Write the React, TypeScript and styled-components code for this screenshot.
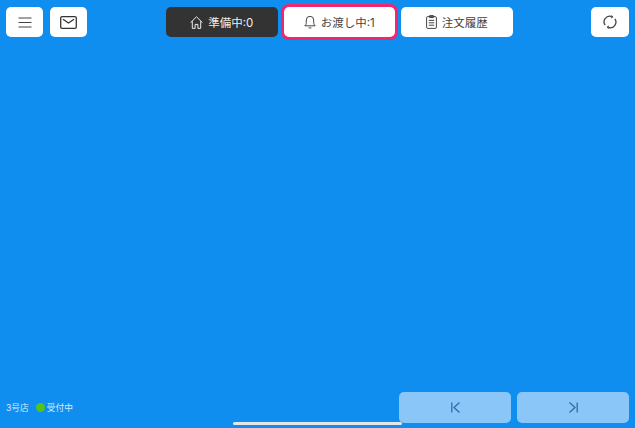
import styled, { createGlobalStyle } from "styled-components";

const GlobalStyle = createGlobalStyle`
    html, body {
        margin: 0;
        padding: 0;
        height: 100%;
        background-color: #0f8ef0;
    }
    body {
        font-family: "Inter", "Noto Sans CJK JP", sans-serif;
    }
`

export default function App() {
    return (
        <Screen>
            <GlobalStyle/>
            <Toolbar>
                <LeftGroup>
                    <IconButton aria-label="menu">
                        <svg width="14" height="11" viewBox="0 0 14 11" fill="none" stroke="#444" strokeWidth="1.2">
                            <path d="M.5 1h13M.5 5.5h13M.5 10h13"/>
                        </svg>
                    </IconButton>
                    <IconButton aria-label="mail">
                        <svg width="17" height="13" viewBox="0 0 17 13" fill="none" stroke="#333" strokeWidth="1.3">
                            <rect x=".7" y=".7" width="15.6" height="11.6" rx="1.4"/>
                            <path d="M3 3.2L8.5 7 14 3.2"/>
                        </svg>
                    </IconButton>
                </LeftGroup>
                <Tabs>
                    <Tab $active>
                        <svg width="13" height="13" viewBox="0 0 13 13" fill="none" stroke="#eee" strokeWidth="1">
                            <path d="M.6 6.6L6.5.8l5.9 5.8M2.3 5.2v7.2h2.8V8.4h2.8v4h2.8V5.2"/>
                        </svg>
                        準備中:0
                    </Tab>
                    <Tab $outlined>
                        <svg width="12" height="14" viewBox="0 0 12 14" fill="none" stroke="#444" strokeWidth="1">
                            <path d="M.8 10.8c1.2-1 1.5-2 1.5-3.6V5a3.7 3.7 0 0 1 7.4 0v2.2c0 1.6.3 2.6 1.5 3.6zM4.6 12.9h2.8"/>
                        </svg>
                        お渡し中:1
                    </Tab>
                    <Tab>
                        <svg width="11" height="14" viewBox="0 0 11 14" fill="none" stroke="#444" strokeWidth="1">
                            <rect x=".6" y="1.6" width="9.8" height="11.8" rx="1.2"/>
                            <path d="M3.6.6h3.8v2H3.6zM2.8 5.4h5.4M2.8 7.8h5.4M2.8 10.2h5.4"/>
                        </svg>
                        注文履歴
                    </Tab>
                </Tabs>
                <RefreshButton aria-label="refresh">
                    <svg width="14" height="14" viewBox="0 0 14 14" fill="none" stroke="#444" strokeWidth="1.3">
                        <path d="M2.2 10.2A5.6 5.6 0 0 1 8.8 1.7M11.8 3.8a5.6 5.6 0 0 1-6.6 8.5"/>
                        <path d="M8.6.4l1.2 1.7-1.8.9M5.4 13.6l-1.2-1.7 1.8-.9" strokeWidth="1"/>
                    </svg>
                </RefreshButton>
            </Toolbar>
            <Footer>
                <Status>
                    <span>3号店</span>
                    <Open><Dot/>受付中</Open>
                </Status>
                <Pager>
                    <PageButton aria-label="first">
                        <svg width="9" height="11" viewBox="0 0 9 11" fill="none" stroke="#2f6da8" strokeWidth="1.3">
                            <path d="M.8 .5v10M8.5 .5L3 5.5l5.5 5"/>
                        </svg>
                    </PageButton>
                    <PageButton aria-label="last">
                        <svg width="9" height="11" viewBox="0 0 9 11" fill="none" stroke="#2f6da8" strokeWidth="1.3">
                            <path d="M8.2 .5v10M.5 .5L6 5.5l-5.5 5"/>
                        </svg>
                    </PageButton>
                </Pager>
            </Footer>
            <HomeBar/>
        </Screen>
    );
}

const Screen = styled.div`
    position: relative;
    width: 635px;
    height: 428px;
    overflow: hidden;
    display: flex;
    flex-direction: column;
    justify-content: space-between;
    background-color: #0f8ef0;
`
const Toolbar = styled.header`
    display: flex;
    align-items: center;
    padding: 7px 6px 0;
`
const LeftGroup = styled.div`
    display: flex;
    gap: 7px;
`
const IconButton = styled.button`
    width: 37px;
    height: 30px;
    padding: 0;
    border: none;
    border-radius: 5px;
    background-color: #fff;
    display: flex;
    align-items: center;
    justify-content: center;
`
const RefreshButton = styled(IconButton)`
    width: 38px;
    margin-left: auto;
`
const Tabs = styled.nav`
    display: flex;
    gap: 6px;
    margin-left: 79px;
`
const Tab = styled.button<{ $active?: boolean; $outlined?: boolean }>`
    width: 111.5px;
    height: 30px;
    padding: 0;
    border: none;
    border-radius: 5px;
    background-color: ${props => props.$active ? "#333" : "#fff"};
    color: ${props => props.$active ? "#eee" : "#444"};
    font-family: inherit;
    font-size: 11.5px;
    display: flex;
    align-items: center;
    justify-content: center;
    gap: 5px;
    box-shadow: ${props => props.$outlined ? "0 0 0 3px #f0266f" : "none"};
`
const Footer = styled.footer`
    display: flex;
    align-items: center;
    justify-content: space-between;
    padding: 0 6px 5px;
`
const Status = styled.div`
    display: flex;
    align-items: center;
    gap: 7px;
    color: #d4e9fb;
    font-size: 8.7px;
`
const Open = styled.span`
    display: flex;
    align-items: center;
    gap: 2px;
`
const Dot = styled.i`
    width: 9px;
    height: 9px;
    border-radius: 50%;
    background-color: #52c41a;
`
const Pager = styled.div`
    display: flex;
    gap: 6px;
`
const PageButton = styled.button`
    width: 112px;
    height: 31px;
    padding: 0;
    border: none;
    border-radius: 5px;
    background-color: #8bc6f8;
    display: flex;
    align-items: center;
    justify-content: center;
`
const HomeBar = styled.div`
    position: absolute;
    left: 233px;
    bottom: 3px;
    width: 169px;
    height: 3px;
    border-radius: 2px;
    background-color: #e6e6e6;
`
